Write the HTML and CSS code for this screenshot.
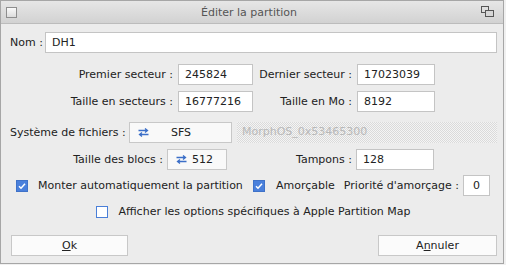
FILE: index.html
```html
<!DOCTYPE html>
<html lang="fr">
<head>
<meta charset="utf-8">
<title>Éditer la partition</title>
<link rel="stylesheet" href="styles.css">
</head>
<body>
<div class="window">
  <div class="titlebar">
    <span class="tb-close"></span>
    <span class="tb-title">Éditer la partition</span>
    <svg class="tb-depth" width="14" height="12" viewBox="0 0 14 12">
      <rect x="0.5" y="0.5" width="7" height="6" fill="none" stroke="#555" stroke-width="1"/>
      <rect x="4.5" y="4.5" width="8" height="6" fill="#d6d6d6" stroke="#555" stroke-width="1"/>
    </svg>
  </div>
  <div class="content">
    <div class="row row-name">
      <span class="lbl">Nom :</span>
      <div class="field grow">DH1</div>
    </div>

    <div class="row row-sect">
      <span class="lbl lbl-a">Premier secteur :</span>
      <div class="field f-a">245824</div>
      <span class="lbl lbl-b">Dernier secteur :</span>
      <div class="field f-b">17023039</div>
    </div>

    <div class="row row-size">
      <span class="lbl lbl-a">Taille en secteurs :</span>
      <div class="field f-a">16777216</div>
      <span class="lbl lbl-b">Taille en Mo :</span>
      <div class="field f-b">8192</div>
    </div>

    <div class="row row-fs">
      <span class="lbl lbl-fs">Système de fichiers :</span>
      <div class="cycle cycle-fs">
        <svg class="cyc-icon" width="11" height="9" viewBox="0 0 11 9">
          <path d="M0.5 2.5H9.5M7 0.5L9.5 2.5L7 4.5" fill="none" stroke="#3c6fc8" stroke-width="1.3"/>
          <path d="M10.5 6.5H1.5M4 4.5L1.5 6.5L4 8.5" fill="none" stroke="#3c6fc8" stroke-width="1.3"/>
        </svg>
        <span class="cyc-text">SFS</span>
      </div>
      <div class="field disabled grow">MorphOS_0x53465300</div>
    </div>

    <div class="row row-blk">
      <span class="lbl lbl-blk">Taille des blocs :</span>
      <div class="cycle cycle-blk">
        <svg class="cyc-icon" width="11" height="9" viewBox="0 0 11 9">
          <path d="M0.5 2.5H9.5M7 0.5L9.5 2.5L7 4.5" fill="none" stroke="#3c6fc8" stroke-width="1.3"/>
          <path d="M10.5 6.5H1.5M4 4.5L1.5 6.5L4 8.5" fill="none" stroke="#3c6fc8" stroke-width="1.3"/>
        </svg>
        <span class="cyc-text">512</span>
      </div>
      <span class="lbl lbl-tamp">Tampons :</span>
      <div class="field f-b2">128</div>
    </div>

    <div class="row row-chk">
      <div class="chk-item chk-mount">
        <span class="chk checked"><svg width="12" height="12" viewBox="0 0 12 12"><path d="M3 6.2L5 8.2L9 3.8" fill="none" stroke="#fff" stroke-width="1.5"/></svg></span>
        <span>Monter automatiquement la partition</span>
      </div>
      <div class="chk-item chk-boot">
        <span class="chk checked"><svg width="12" height="12" viewBox="0 0 12 12"><path d="M3 6.2L5 8.2L9 3.8" fill="none" stroke="#fff" stroke-width="1.5"/></svg></span>
        <span>Amorçable</span>
      </div>
      <span class="lbl lbl-prio">Priorité d'amorçage :</span>
      <div class="field f-prio">0</div>
    </div>

    <div class="row row-apm">
      <span class="chk"></span>
      <span>Afficher les options spécifiques à Apple Partition Map</span>
    </div>

    <div class="row row-btn">
      <div class="btn btn-ok"><u>O</u>k</div>
      <div class="btn btn-cancel">A<u>n</u>nuler</div>
    </div>
  </div>
</div>
</body>
</html>
```

FILE: styles.css
```css
html, body {
  margin: 0;
  padding: 0;
  background: #f0f0f0;
}
body {
  font-family: "DejaVu Sans", "Noto Sans", sans-serif;
  font-size: 11px;
  color: #222;
}
.window {
  box-sizing: border-box;
  width: 504px;
  height: 264px;
  border: 1px solid #a6a6a6;
  background: #ececec;
}
.titlebar {
  box-sizing: border-box;
  height: 23px;
  border-bottom: 1px solid #bcbcbc;
  background: linear-gradient(#e6e6e6, #d2d2d2);
  display: flex;
  align-items: center;
}
.tb-close {
  box-sizing: border-box;
  width: 11px;
  height: 11px;
  margin-left: 5px;
  border: 1px solid #8e8e8e;
  background: linear-gradient(#fafafa, #dcdcdc);
}
.tb-title {
  flex: 1;
  text-align: center;
  color: #555;
}
.tb-depth {
  margin-right: 8px;
}
.content {
  padding: 0 6px 0 9px;
}
.row {
  display: flex;
  align-items: center;
  height: 21px;
}
.field {
  box-sizing: border-box;
  height: 21px;
  line-height: 19px;
  border: 1px solid #c4c4c4;
  background: #fff;
  padding: 0 6px;
  white-space: nowrap;
  overflow: hidden;
}
.grow { flex: 1; }
.lbl { white-space: nowrap; }

.row-name { margin-top: 8px; }
.row-name .lbl { width: 31px; margin-right: 4px; }

.row-sect { margin-top: 11px; }
.row-size { margin-top: 6px; }
.lbl-a { width: 163px; text-align: right; margin-right: 5px; }
.f-a { width: 75px; }
.lbl-b { width: 95px; text-align: right; margin: 0 5px 0 4px; }
.f-b { width: 78px; }

.row-fs { margin-top: 10px; }
.lbl-fs { width: 112px; margin-right: 7px; }
.cycle {
  box-sizing: border-box;
  height: 21px;
  border: 1px solid #c8c8c8;
  background: #f9f9f9;
  display: flex;
  align-items: center;
  padding-left: 8px;
}
.cyc-text { flex: 1; text-align: center; }
.cycle-fs { width: 103px; margin-right: 5px; }
.cycle-fs .cyc-text { padding-right: 18px; }
.disabled {
  border: none;
  color: #b8b8b8;
  padding-left: 5px;
  background-color: #ececec;
  background-image: repeating-conic-gradient(#dadada 0 25%, #f4f4f4 0 50%);
  background-size: 2px 2px;
}

.row-blk { margin-top: 6px; }
.lbl-blk { width: 153px; text-align: right; margin-right: 4px; }
.cycle-blk { width: 60px; }
.cycle-blk .cyc-text { padding-right: 8px; }
.lbl-tamp { width: 125px; text-align: right; margin-right: 4px; }
.f-b2 { width: 78px; }

.row-chk { margin-top: 5px; }
.chk-item { display: flex; align-items: center; gap: 10px; }
.chk-mount { width: 237px; margin-left: 6px; }
.chk-boot { gap: 11px; margin-right: 9px; }
.chk {
  box-sizing: border-box;
  width: 12px;
  height: 12px;
  border: 1px solid #4a7fd8;
  background: #fff;
  display: flex;
}
.chk.checked {
  background: #4a80dc;
  border-color: #3f72c8;
}
.chk svg { margin: -1px; }
.lbl-prio { margin-right: 4px; }
.f-prio { width: 27px; text-align: center; padding: 0; }

.row-apm { margin-top: 5px; justify-content: center; gap: 10px; }

.row-btn { margin-top: 13px; justify-content: space-between; }
.btn {
  box-sizing: border-box;
  height: 21px;
  line-height: 19px;
  border: 1px solid #c8c8c8;
  background: #fbfbfb;
  text-align: center;
}
.btn-ok { width: 117px; margin-left: 1px; }
.btn-cancel { width: 119px; }
```
